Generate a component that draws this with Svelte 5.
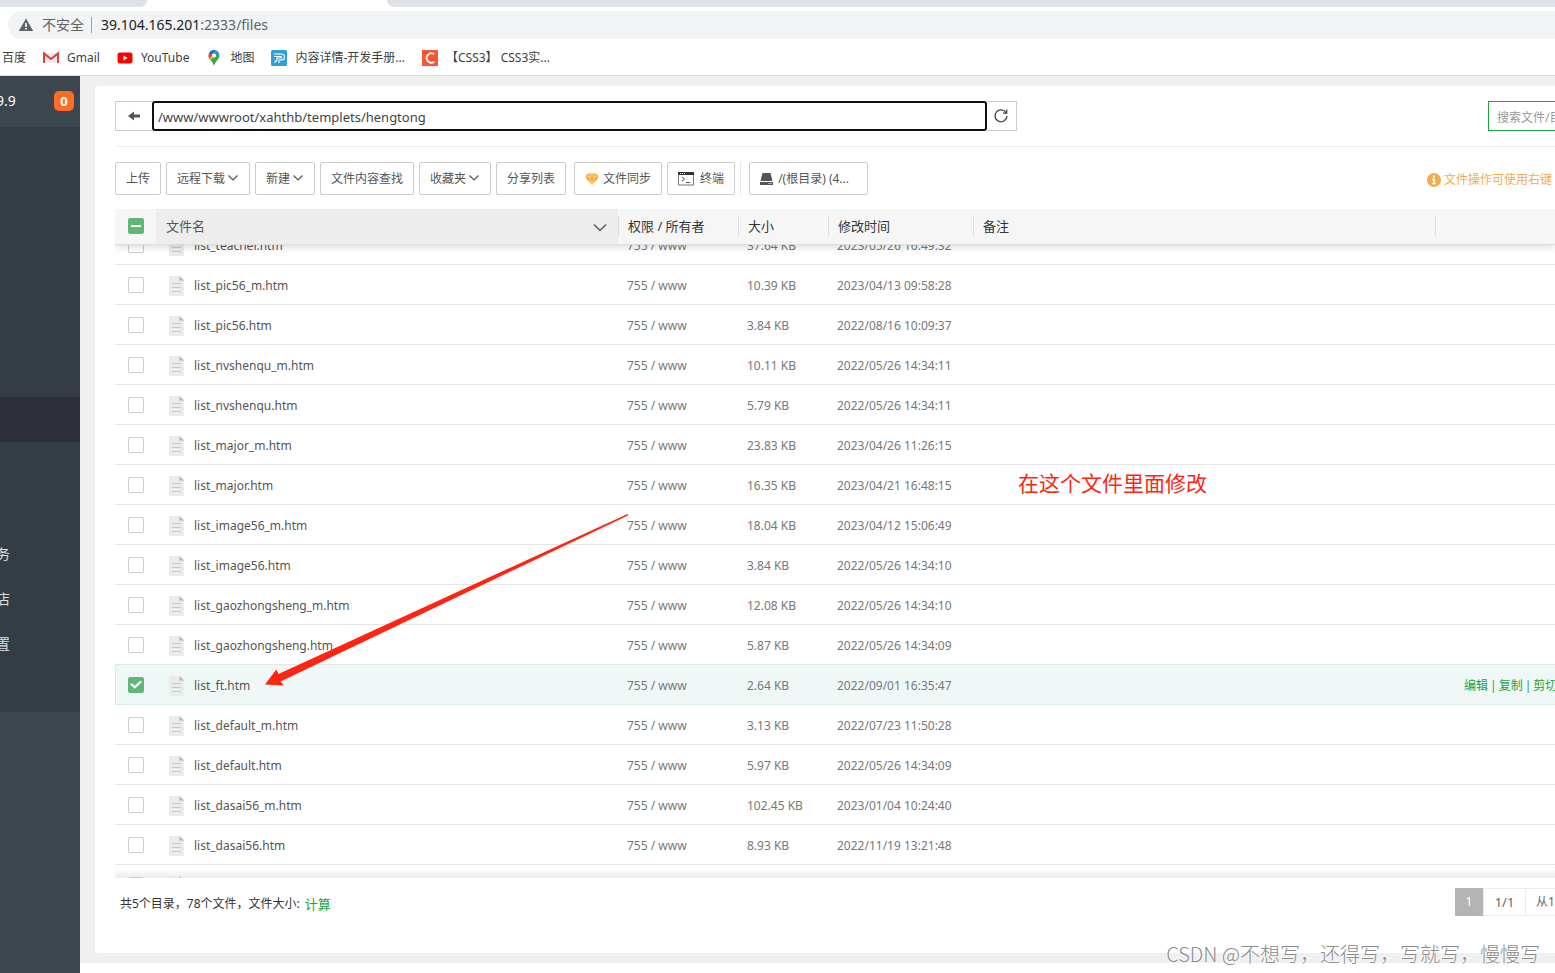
<script lang="ts">
  let path = '/www/wwwroot/xahthb/templets/hengtong';
  let search = '';

  const menu = ['', '', '', '', '', '', '', '', '', '务', '店', '置', ''];
  const activeItem = 6;

  const tools = [
    { label: '上传', menu: false },
    { label: '远程下载', menu: true },
    { label: '新建', menu: true },
    { label: '文件内容查找', menu: false },
    { label: '收藏夹', menu: true },
    { label: '分享列表', menu: false }
  ];

  let files = [
    { name: 'list_teacher.htm', size: '37.64 KB', time: '2023/05/26 16:49:32', checked: false },
    { name: 'list_pic56_m.htm', size: '10.39 KB', time: '2023/04/13 09:58:28', checked: false },
    { name: 'list_pic56.htm', size: '3.84 KB', time: '2022/08/16 10:09:37', checked: false },
    { name: 'list_nvshenqu_m.htm', size: '10.11 KB', time: '2022/05/26 14:34:11', checked: false },
    { name: 'list_nvshenqu.htm', size: '5.79 KB', time: '2022/05/26 14:34:11', checked: false },
    { name: 'list_major_m.htm', size: '23.83 KB', time: '2023/04/26 11:26:15', checked: false },
    { name: 'list_major.htm', size: '16.35 KB', time: '2023/04/21 16:48:15', checked: false },
    { name: 'list_image56_m.htm', size: '18.04 KB', time: '2023/04/12 15:06:49', checked: false },
    { name: 'list_image56.htm', size: '3.84 KB', time: '2022/05/26 14:34:10', checked: false },
    { name: 'list_gaozhongsheng_m.htm', size: '12.08 KB', time: '2022/05/26 14:34:10', checked: false },
    { name: 'list_gaozhongsheng.htm', size: '5.87 KB', time: '2022/05/26 14:34:09', checked: false },
    { name: 'list_ft.htm', size: '2.64 KB', time: '2022/09/01 16:35:47', checked: true },
    { name: 'list_default_m.htm', size: '3.13 KB', time: '2022/07/23 11:50:28', checked: false },
    { name: 'list_default.htm', size: '5.97 KB', time: '2022/05/26 14:34:09', checked: false },
    { name: 'list_dasai56_m.htm', size: '102.45 KB', time: '2023/01/04 10:24:40', checked: false },
    { name: 'list_dasai56.htm', size: '8.93 KB', time: '2022/11/19 13:21:48', checked: false },
    { name: '', size: '', time: '', checked: false }
  ];

  $: checkedCount = files.filter((file) => file.checked).length;
  $: allChecked = checkedCount === files.length;
  $: someChecked = checkedCount > 0 && !allChecked;

  const toggleAll = () => {
    const next = !allChecked;
    files = files.map((file) => ({ ...file, checked: next }));
  };
</script>

{#snippet columns()}
  <colgroup>
    <col class="col-check" />
    <col />
    <col class="col-perm" />
    <col class="col-size" />
    <col class="col-time" />
    <col />
    <col class="col-ops" />
  </colgroup>
{/snippet}

<div class="window">
  <div class="tabs">
    <span class="tabs__side tabs__side--left"></span>
    <span class="tabs__side tabs__side--right"></span>
  </div>

  <div class="address">
    <svg width="16" height="16" viewBox="0 0 16 16" aria-hidden="true">
      <path d="M8 1.5 15.2 14H.8z" fill="#5f6368" />
      <path d="M7.2 6h1.6v4H7.2zM7.2 11h1.6v1.6H7.2z" fill="#fff" />
    </svg>
    <span class="address__warn">不安全</span>
    <span class="address__url"><b>39.104.165.201</b>:2333/files</span>
  </div>

  <nav class="bookmarks">
    <a href="#baidu">百度</a>
    <a href="#gmail">
      <svg width="16" height="16" viewBox="0 0 16 16" aria-hidden="true">
        <path d="M1 3h14v10H1z" fill="#eceaea" />
        <path d="M1 13V3.4L8 9l7-5.6V13" fill="none" stroke="#d9453a" stroke-width="2" />
      </svg>
      Gmail
    </a>
    <a href="#youtube">
      <svg width="16" height="16" viewBox="0 0 16 16" aria-hidden="true">
        <rect x="0.5" y="2.5" width="15" height="11" rx="2.5" fill="#f00" />
        <path d="M6.4 5.5v5l4.2-2.5z" fill="#fff" />
      </svg>
      YouTube
    </a>
    <a href="#maps">
      <svg width="16" height="16" viewBox="0 0 16 16" aria-hidden="true">
        <path d="M8 0a5.4 5.4 0 0 1 5.4 5.4C13.4 9.5 9 11 8 16 7 11 2.6 9.5 2.6 5.4A5.4 5.4 0 0 1 8 0z" fill="#34a853" />
        <path d="M3.7 2.1 8 5.4 3.9 9.7C3.1 8.5 2.6 7 2.6 5.4c0-1.3.4-2.4 1.1-3.3z" fill="#ea4335" />
        <path d="M3.7 2.1A5.4 5.4 0 0 1 9.6.3L5.7 4.8z" fill="#1a73e8" />
        <path d="m9.6.3 2.700 1.900L8 7.400 4.200 10.100l-.8-1.500L6 5.500z" fill="#fbbc04" />
        <path d="M9.600.3a5.400 5.400 0 0 1 3.100 2.500L9 6.500 7 3.500z" fill="#4285f4" />
        <circle cx="8" cy="5.400" r="2" fill="#fff" />
      </svg>
      地图
    </a>
    <a href="#manual">
      <svg width="16" height="16" viewBox="0 0 16 16" aria-hidden="true">
        <rect width="16" height="16" rx="1.5" fill="#2f9fd8" />
        <path d="M3 4h7.5a3 3 0 0 1 0 6H8v3M3 6.500h7a.8.8 0 0 1 0 1.500H6v2L3.500 12.500" fill="none" stroke="#fff" stroke-width="1.100" />
      </svg>
      内容详情-开发手册...
    </a>
    <a href="#css3">
      <svg width="16" height="16" viewBox="0 0 16 16" aria-hidden="true">
        <rect width="16" height="16" fill="#fc5531" />
        <path d="M12.200 4.200A4.700 4.700 0 1 0 12.200 11.800" fill="none" stroke="#fff" stroke-width="1.800" />
      </svg>
      【CSS3】 CSS3实...
    </a>
  </nav>

  <div class="page">
    <aside class="sidebar">
      <div class="sidebar__head">
        <span>9.9</span>
        <span class="sidebar__badge">0</span>
      </div>
      <nav class="sidebar__menu">
        {#each menu as label, i}
          <a href="#menu-{i}" class:active={i === activeItem} aria-label={label || null}>{label}</a>
        {/each}
      </nav>
    </aside>

    <main class="main">
      <section class="panel">
        <div class="pathbar">
          <button type="button" class="pathbar__back" aria-label="返回">
            <svg width="12" height="10" viewBox="0 0 12 10" aria-hidden="true">
              <path d="M0 5 6 .5v3h6v3H6v3z" fill="#555" />
            </svg>
          </button>
          <input class="pathbar__input" type="text" bind:value={path} aria-label="路径" />
          <button type="button" class="pathbar__refresh" aria-label="刷新">
            <svg width="16" height="16" viewBox="0 0 16 16" fill="none" stroke="#444" stroke-width="1.300" aria-hidden="true">
              <path d="M13.200 4.800A6 6 0 1 0 14 8M13.700 1.500v3.600H10" />
            </svg>
          </button>
          <input class="pathbar__search" type="text" bind:value={search} placeholder="搜索文件/目录" aria-label="搜索文件" />
        </div>

        <div class="toolbar">
          {#each tools as tool}
            <button type="button" class="tool">
              {tool.label}
              {#if tool.menu}
                <svg width="12" height="12" viewBox="0 0 12 12" aria-hidden="true">
                  <path d="m1.500 2.500 4.500 4.500L10.500 2.500" fill="none" stroke="#555" stroke-width="1.200" />
                </svg>
              {/if}
            </button>
          {/each}
          <button type="button" class="tool tool--sync">
            <svg width="14" height="12" viewBox="0 0 14 12" aria-hidden="true">
              <path d="M3 .5h8L14 4 7 12 0 4z" fill="#f8a52c" />
              <path d="M0 4h14M3 .5 4.500 4 7 12 9.500 4 11 .5M4.500 4 7 .5 9.500 4" fill="none" stroke="#ffe2a5" stroke-width=".8" />
            </svg>
            文件同步
          </button>
          <button type="button" class="tool tool--term">
            <svg width="16" height="14" viewBox="0 0 16 14" aria-hidden="true">
              <path d="M.5.500h15v12.500H.5z" fill="#fff" stroke="#777" />
              <path d="M0 0h16v3H0z" fill="#333" />
              <path d="M2 1h1v1H2zM4 1h1v1H4zM6 1h1v1H6z" fill="#fff" />
              <path d="m4 5 2.500 2L4 9M8 10.500h4" fill="none" stroke="#555" />
            </svg>
            终端
          </button>
          <span class="toolbar__split"></span>
          <button type="button" class="tool tool--disk">
            <svg width="13" height="12" viewBox="0 0 13 12" aria-hidden="true">
              <path d="M2.500 0h8L12.500 8H.5zM0 9h13v3H0z" fill="#555" />
              <path d="M8.500 10h1v1h-1zM10.500 10h1v1h-1z" fill="#fff" />
            </svg>
            /(根目录) (4...
          </button>
          <span class="toolbar__hint">
            <svg width="14" height="14" viewBox="0 0 14 14" aria-hidden="true">
              <circle cx="7" cy="7" r="7" fill="#f0ad4e" />
              <path d="M6 2.500h2v2H6zM5 5.700h3V10h1v1.300H5V10h1V7H5z" fill="#fff" />
            </svg>
            文件操作可使用右键
          </span>
        </div>

        <table class="files files--head">
          {@render columns()}
          <thead>
            <tr>
              <th class="check">
                <input
                  type="checkbox"
                  checked={allChecked}
                  indeterminate={someChecked}
                  on:change={toggleAll}
                  aria-label="全选"
                />
              </th>
              <th class="name">
                <div class="name__sort">
                  文件名
                  <svg width="14" height="14" viewBox="0 0 14 14" aria-hidden="true">
                    <path d="m1 5.500 6 6 6-6" fill="none" stroke="#555" stroke-width="1.300" />
                  </svg>
                </div>
              </th>
              <th><span>权限 / 所有者</span></th>
              <th><span>大小</span></th>
              <th><span>修改时间</span></th>
              <th><span>备注</span></th>
              <th><span></span></th>
            </tr>
          </thead>
        </table>

        <div class="list">
          <table class="files files--body">
            {@render columns()}
            <tbody>
              {#each files as file}
                <tr class:selected={file.checked}>
                  <td class="check">
                    <input type="checkbox" bind:checked={file.checked} aria-label={file.name || null} />
                  </td>
                  <td>
                    <div class="file">
                      <svg width="15" height="20" viewBox="0 0 15 20" aria-hidden="true">
                        <path d="M0 0h10.500L15 4.500V20H0z" fill="#ebebeb" />
                        <path d="M10.500 0v4.500H15z" fill="#b5b5b5" />
                        <path d="M3 7.500h9M3 11.500h9M3 15.500h9" stroke="#c8c8c8" />
                      </svg>
                      <span>{file.name}</span>
                    </div>
                  </td>
                  <td>{file.name ? '755 / www' : ''}</td>
                  <td>{file.size}</td>
                  <td>{file.time}</td>
                  <td></td>
                  <td class="ops">
                    {#if file.checked}
                      <a href="#edit">编辑</a><i>|</i><a href="#copy">复制</a><i>|</i><a href="#cut">剪切</a>
                    {/if}
                  </td>
                </tr>
              {/each}
            </tbody>
          </table>
        </div>

        <footer class="footer">
          <span>共5个目录，78个文件，文件大小:</span>
          <a href="#count">计算</a>
          <div class="pager">
            <span class="pager__current">1</span>
            <span class="pager__total">1/1</span>
            <span class="pager__range">从1-83条</span>
          </div>
        </footer>
      </section>
    </main>
  </div>

  <svg class="arrow" width="364" height="176" viewBox="0 0 364 176" aria-hidden="true">
    <path d="M362.500 0 13.500 160 11.300 155.500 0 170.500 19 171.500 15.500 167.500 363 1.500z" fill="#ff2412" />
  </svg>
  <p class="note">在这个文件里面修改</p>
  <p class="watermark">CSDN @不想写，还得写，写就写，慢慢写</p>
</div>

<style>
  :global(body) {
    margin: 0;
    overflow: hidden;
  }

  .window {
    position: relative;
    display: flex;
    flex-direction: column;
    height: 100vh;
    overflow: hidden;
    background: #fff;
    color: #555;
    font-family: 'Noto Sans', 'Noto Sans CJK SC', sans-serif;
    font-size: 12px;
    line-height: 20px;
  }

  .window * {
    box-sizing: border-box;
  }

  svg {
    flex: none;
  }

  a {
    color: inherit;
    text-decoration: none;
  }

  button,
  input {
    font: inherit;
    color: inherit;
    margin: 0;
  }

  .tabs {
    display: flex;
    flex: none;
    gap: 240px;
    height: 7px;
  }

  .tabs__side {
    background: #dee1e6;
  }

  .tabs__side--left {
    width: 147px;
    border-bottom-right-radius: 7px;
  }

  .tabs__side--right {
    flex: 1;
    border-bottom-left-radius: 7px;
  }

  .address {
    display: flex;
    flex: none;
    align-items: center;
    height: 28px;
    margin: 4px 0 0 8px;
    padding-left: 10px;
    border-radius: 14px 0 0 14px;
    background: #f1f3f4;
    color: #5f6368;
    font-size: 14px;
  }

  .address__warn {
    margin-left: 8px;
    padding-right: 7px;
  }

  .address__url {
    padding-left: 9px;
    border-left: 1px solid #9aa0a6;
    line-height: 16px;
  }

  .address__url b {
    color: #202124;
    font-weight: 400;
  }

  .bookmarks {
    display: flex;
    flex: none;
    align-items: center;
    gap: 17px;
    height: 37px;
    padding: 2px 0 0 2px;
    border-bottom: 1px solid #dadce0;
    color: #3c4043;
    white-space: nowrap;
  }

  .bookmarks a {
    display: flex;
    align-items: center;
    gap: 8px;
  }

  .page {
    display: flex;
    flex: 1;
    min-height: 0;
  }

  .sidebar {
    flex: none;
    width: 80px;
    overflow: hidden;
    background: #3d454f;
    color: #fff;
  }

  .sidebar__head {
    display: flex;
    align-items: center;
    justify-content: space-between;
    height: 51px;
    margin-left: -4px;
    padding: 0 6px 2px 0;
    font-size: 14px;
  }

  .sidebar__badge {
    width: 20px;
    height: 20px;
    border-radius: 5px;
    background: #ff6c23;
    font-size: 13px;
    font-weight: 700;
    text-align: center;
  }

  .sidebar__menu {
    background: #353d44;
  }

  .sidebar__menu a {
    display: block;
    height: 45px;
    margin-left: -4px;
    color: #ddd;
    font-size: 14px;
    line-height: 43px;
  }

  .sidebar__menu a.active {
    background: #2c2f38;
  }

  .main {
    display: flex;
    flex: 1;
    min-width: 0;
    margin-bottom: 10px;
    padding: 10px 0 10px 15px;
    background: #f0f0f0;
  }

  .panel {
    display: flex;
    flex: 1;
    flex-direction: column;
    min-width: 0;
    padding: 15px 0 0 20px;
    border-radius: 4px 0 0 4px;
    background: #fff;
  }

  .pathbar {
    display: flex;
    flex: none;
    height: 46px;
    padding-bottom: 15px;
    border-bottom: 1px solid #eee;
  }

  .pathbar__back,
  .pathbar__refresh {
    display: flex;
    align-items: center;
    justify-content: center;
    height: 30px;
    padding: 0;
    border: 1px solid #ccc;
    background: #fff;
  }

  .pathbar__back {
    width: 37px;
    border-right: 0;
  }

  .pathbar__refresh {
    width: 30px;
    padding-right: 2px;
    border-left: 0;
  }

  .pathbar__input {
    flex: 0 1 835px;
    min-width: 0;
    height: 30px;
    padding: 2px 4px 0;
    border: 2px solid #101010;
    border-radius: 3px;
    outline: none;
    color: #444;
    font-size: 13px;
  }

  .pathbar__search {
    width: 67px;
    height: 30px;
    margin-left: auto;
    padding: 2px 0 0 8px;
    border: 1px solid #20a53a;
    border-right: 0;
    outline: none;
  }

  .pathbar__search::placeholder {
    color: #999;
  }

  .toolbar {
    display: flex;
    flex: none;
    align-items: center;
    gap: 5px;
    height: 62px;
    white-space: nowrap;
  }

  .tool {
    display: flex;
    align-items: center;
    gap: 2px;
    height: 33px;
    padding: 2px 10px 0;
    border: 1px solid #ccc;
    border-radius: 2px;
    background: #fff;
  }

  .tool--sync {
    gap: 4px;
    margin-left: 3px;
  }

  .tool--term {
    gap: 6px;
  }

  .toolbar__split {
    width: 1px;
    height: 33px;
    background: #e6e6e6;
  }

  .tool--disk {
    gap: 5px;
    width: 119px;
    margin-left: 3px;
  }

  .toolbar__hint {
    display: flex;
    align-items: center;
    gap: 3px;
    margin-left: auto;
    padding: 4px 3px 0 0;
    color: #f0ad4e;
  }

  .files {
    flex: none;
    width: 100%;
    table-layout: fixed;
    border-collapse: separate;
    border-spacing: 0;
  }

  .col-check {
    width: 41px;
  }

  .col-perm {
    width: 120px;
  }

  .col-size {
    width: 90px;
  }

  .col-time {
    width: 145px;
  }

  .col-ops {
    width: 120px;
  }

  .files--head {
    position: relative;
    z-index: 1;
    background: #f6f6f6;
    box-shadow: 0 2px 8px rgb(0 0 0 / 0.15);
    clip-path: inset(0 0 -10px 0);
    color: #333;
    font-size: 13px;
  }

  th {
    height: 36px;
    padding: 0 0 2px;
    border-bottom: 1px solid #ddd;
    font-weight: 400;
    text-align: left;
  }

  th > span {
    display: block;
    height: 20px;
    padding-left: 9px;
    border-left: 1px solid #ddd;
  }

  th.name {
    background: #ededed;
    color: #555;
  }

  .name__sort {
    display: flex;
    align-items: center;
    justify-content: space-between;
    padding: 0 11px 0 10px;
  }

  th.check {
    padding-left: 13px;
  }

  input[type='checkbox'] {
    display: grid;
    place-content: center;
    width: 16px;
    height: 16px;
    appearance: none;
    border: 1px solid #ccc;
    border-radius: 2px;
    background: #fff;
  }

  input[type='checkbox']:checked,
  input[type='checkbox']:indeterminate {
    border-color: #5fb878;
    background: #5fb878;
  }

  input[type='checkbox']:indeterminate::before {
    width: 10px;
    height: 2px;
    background: #fff;
    content: '';
  }

  input[type='checkbox']:checked::before {
    width: 12px;
    height: 10px;
    background: #fff;
    clip-path: polygon(0 50%, 15% 37%, 40% 62%, 85% 10%, 100% 24%, 40% 92%);
    content: '';
  }

  .list {
    flex: 1;
    min-height: 0;
    overflow: hidden;
    box-shadow: inset 0 -12px 12px -10px rgb(0 0 0 / 0.12);
  }

  /* the list is scrolled half a row down */
  .files--body {
    margin-top: -20px;
    color: #777;
  }

  td {
    height: 40px;
    padding: 2px 0 0 9px;
    border-bottom: 1px solid #e6e6e6;
    white-space: nowrap;
  }

  td.check {
    padding: 0 0 0 13px;
  }

  tr.selected td {
    border-bottom-color: #d9ede5;
    background: #f0f8f7;
  }

  tr.selected td:first-child {
    box-shadow: inset 1px 0 #d9ede5;
  }

  .file {
    display: flex;
    align-items: center;
    gap: 10px;
    padding-left: 4px;
    color: #555;
  }

  td.ops {
    padding-left: 29px;
    overflow: hidden;
    color: #20a53a;
  }

  .ops i {
    padding: 0 2px;
    font-style: normal;
  }

  .footer {
    display: flex;
    flex: none;
    align-items: center;
    gap: 5px;
    height: 75px;
    padding: 0 0 24px 5px;
    color: #333;
  }

  .footer a {
    color: #20a53a;
    font-size: 13px;
  }

  .pager {
    display: flex;
    margin: 0 0 4px auto;
    color: #666;
    line-height: 26px;
    white-space: nowrap;
  }

  .pager span {
    height: 28px;
    border: 1px solid #ececec;
    text-align: center;
  }

  .pager .pager__current {
    width: 28px;
    border-color: #b4b4b4;
    background: #b4b4b4;
    color: #fff;
  }

  .pager .pager__total {
    width: 43px;
    font-size: 13px;
  }

  .pager .pager__range {
    width: 29px;
    padding-left: 10px;
    border-right: 0;
    border-left: 0;
    overflow: hidden;
    text-align: left;
  }

  .arrow {
    position: absolute;
    top: 514px;
    left: 265px;
    z-index: 2;
  }

  .note {
    position: absolute;
    top: 468px;
    left: 1018px;
    z-index: 2;
    margin: 0;
    color: #ff2412;
    font-size: 21px;
    line-height: 30px;
  }

  .watermark {
    position: absolute;
    right: 15px;
    bottom: 4px;
    z-index: 2;
    margin: 0;
    color: #8c8c8c;
    font-family: 'Noto Sans CJK SC', sans-serif;
    font-size: 20px;
    font-weight: 300;
    line-height: 30px;
    text-shadow: -1px -1px #fff;
    white-space: nowrap;
  }
</style>
